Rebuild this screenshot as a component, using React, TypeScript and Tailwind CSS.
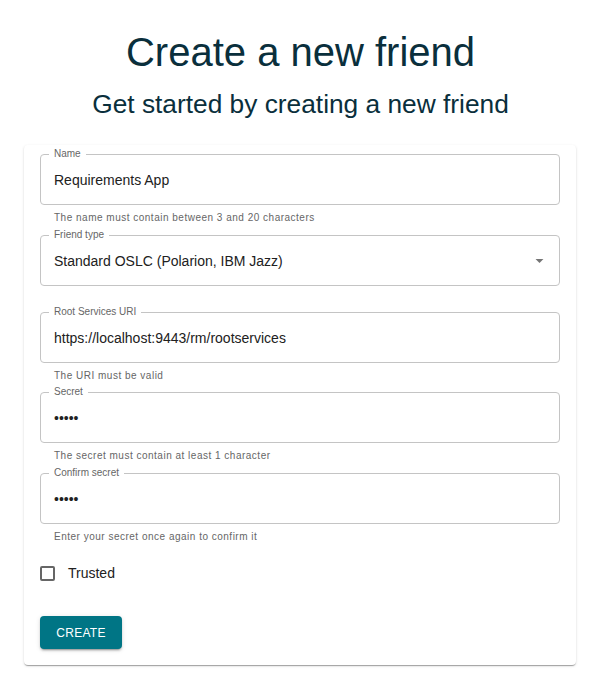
import { ReactNode } from "react";

function Outlined({ label, children }: { label: string; children: ReactNode }) {
  return (
    <div className="relative h-[51px] rounded-[4px] border border-[#c4c4c4] flex items-center">
      <span className="absolute -top-[7px] left-[8px] px-[5px] bg-white text-[10px] leading-[12px] text-[#666666]">
        {label}
      </span>
      {children}
    </div>
  );
}

function Helper({ text }: { text: string }) {
  return (
    <p className="mt-[5px] pl-[14px] text-[10px] leading-[16px] tracking-[0.5px] text-[#666666]">
      {text}
    </p>
  );
}

function TextField({
  label,
  value,
  type = "text",
}: {
  label: string;
  value: string;
  type?: string;
}) {
  return (
    <Outlined label={label}>
      <input
        type={type}
        readOnly
        value={value}
        className="w-full bg-transparent pl-[13px] pr-[14px] pt-[1px] text-[14px] text-[#212121] outline-none font-['Liberation_Sans',Arial,sans-serif]"
      />
    </Outlined>
  );
}

export default function App() {
  return (
    <div className="min-h-screen bg-white font-['Liberation_Sans',Arial,sans-serif] text-[#212121]">
      <div className="flex flex-col items-center pt-[28px]">
        <h1 className="text-[40px] leading-[48px] text-[#0a2f3c]">Create a new friend</h1>
        <h2 className="mt-[12px] text-[26.3px] leading-[32px] text-[#0a2f3c]">
          Get started by creating a new friend
        </h2>
      </div>

      {/* form card */}
      <div className="mt-[25px] ml-[24px] w-[552px] rounded-[4px] bg-white px-[16px] pt-[9px] pb-[16px] shadow-[0_2px_1px_-1px_rgba(0,0,0,0.2),0_1px_1px_0_rgba(0,0,0,0.14),0_1px_3px_0_rgba(0,0,0,0.12)]">
        <TextField label="Name" value="Requirements App" />
        <Helper text="The name must contain between 3 and 20 characters" />

        <div className="mt-[9px]">
          <Outlined label="Friend type">
            <span className="flex-1 pl-[13px] pt-[1px] text-[14px] text-[#212121]">
              Standard OSLC (Polarion, IBM Jazz)
            </span>
            <svg viewBox="0 0 24 24" className="mr-[10px] h-[19px] w-[19px] fill-[#757575]">
              <path d="M7 10l5 5 5-5z" />
            </svg>
          </Outlined>
        </div>

        <div className="mt-[26px]">
          <TextField label="Root Services URI" value="https://localhost:9443/rm/rootservices" />
        </div>
        <Helper text="The URI must be valid" />

        <div className="mt-[8px]">
          <TextField label="Secret" value="12345" type="password" />
        </div>
        <Helper text="The secret must contain at least 1 character" />

        <div className="mt-[9px]">
          <TextField label="Confirm secret" value="12345" type="password" />
        </div>
        <Helper text="Enter your secret once again to confirm it" />

        <label className="mt-[21px] flex h-[15px] items-center gap-[13px]">
          <span className="h-[15px] w-[15px] rounded-[2px] border-2 border-[#666666]" />
          <span className="text-[14px] text-[#212121]">Trusted</span>
        </label>

        <button
          type="button"
          className="mt-[35px] h-[33px] w-[82px] rounded-[4px] bg-[#007585] text-[12px] font-medium uppercase tracking-[0.3px] text-white shadow-[0_3px_1px_-2px_rgba(0,0,0,0.2),0_2px_2px_0_rgba(0,0,0,0.14),0_1px_5px_0_rgba(0,0,0,0.12)]"
        >
          Create
        </button>
      </div>
    </div>
  );
}
